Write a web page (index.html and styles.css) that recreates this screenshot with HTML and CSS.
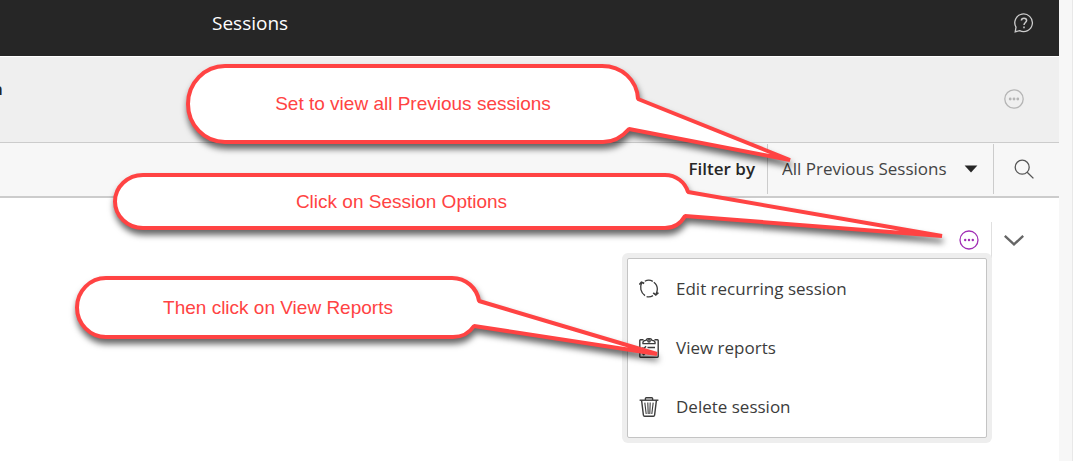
FILE: index.html
```html
<!DOCTYPE html>
<html lang="en">
  <head>
    <meta charset="UTF-8" />
    <meta name="viewport" content="width=device-width, initial-scale=1.0" />
    <title>Sessions</title>
    <link rel="stylesheet" href="styles.css">
  </head>
  <body>
    <div class="page">
      <header class="header">
        <h1 class="header__title">Sessions</h1>
        <button class="icon-button header__help" aria-label="Help">
          <svg class="icon" viewBox="0 0 20 20" fill="none" stroke="currentColor" stroke-width="1.3">
            <path d="M1.2 18.8L2 14.2A8.8 8.8 0 1 1 5.6 17.6L1.2 18.8z" />
            <path d="M7.4 7.6C7.4 4.4 12.6 4.4 12.6 7.6C12.6 9.6 10 9.4 10 12" stroke-width="1.5" />
            <path d="M10 13.4v1.8" stroke-width="1.5" />
          </svg>
        </button>
      </header>

      <section class="banner">
        <h2 class="banner__title">n</h2>
        <button class="icon-button banner__options" aria-label="Room options">
          <svg class="icon" viewBox="0 0 20 20">
            <circle cx="10" cy="10" r="9.2" fill="none" stroke="currentColor" stroke-width="1.3" />
            <g fill="currentColor">
              <circle cx="6.2" cy="10" r="1.4" />
              <circle cx="10" cy="10" r="1.4" />
              <circle cx="13.8" cy="10" r="1.4" />
            </g>
          </svg>
        </button>
      </section>

      <div class="filter">
        <label class="filter__label" for="filter">Filter by</label>
        <div class="filter__field">
          <select class="filter__select" id="filter">
            <option>All Previous Sessions</option>
          </select>
          <svg class="filter__caret" viewBox="0 0 14 8" fill="currentColor">
            <path d="M0.6 0.5h12.8L7 7.5z" />
          </svg>
        </div>
        <button class="icon-button filter__search" aria-label="Search">
          <svg class="icon" viewBox="0 0 20 20" fill="none" stroke="currentColor" stroke-width="1.3">
            <circle cx="8.2" cy="8.2" r="7" />
            <path d="M13.2 13.2L19.4 19.4" />
          </svg>
        </button>
      </div>

      <main class="sessions">
        <div class="session">
          <button class="icon-button session__options" aria-label="Session options">
            <svg class="icon" viewBox="0 0 20 20">
              <circle cx="10" cy="10" r="9" fill="none" stroke="currentColor" stroke-width="1.3" />
              <g fill="currentColor">
                <circle cx="6.2" cy="10" r="1.2" />
                <circle cx="10" cy="10" r="1.2" />
                <circle cx="13.8" cy="10" r="1.2" />
              </g>
            </svg>
          </button>
          <button class="icon-button session__toggle" aria-label="Expand session">
            <svg class="icon" viewBox="0 0 20 20" fill="none" stroke="currentColor" stroke-width="2.4">
              <path d="M0.8 5.8L10 14.4L19.2 5.8" />
            </svg>
          </button>
        </div>

        <div class="menu">
          <button class="menu__item">
            <svg class="icon" viewBox="0 0 20 20" fill="none" stroke="currentColor" stroke-width="1.3">
              <path d="M2.6 4C0.8 8 1.4 13.4 6 16.6" />
              <path d="M7.6 17.6C9.8 18.2 12 17.8 14 16.6" />
              <path d="M5.8 2.2C8.2 0.9 11.4 0.9 13.8 2.4" />
              <path d="M14.8 3.2C18.6 6.2 19 11 17 15.4" />
              <path d="M0.4 5.6L2.4 3.2L5.2 4.4" stroke-width="1.7" />
              <path d="M14.2 13.8L16.8 15.8L19.4 13.6" stroke-width="1.7" />
            </svg>
            Edit recurring session
          </button>
          <button class="menu__item">
            <svg class="icon" viewBox="0 0 20 20" fill="none" stroke="currentColor" stroke-width="1.4">
              <path d="M4.5 1.7H1.6A0.9 0.9 0 0 0 0.8 2.6V18.4A0.9 0.9 0 0 0 1.6 19.3H18.4A0.9 0.9 0 0 0 19.2 18.4V2.6A0.9 0.9 0 0 0 18.4 1.7H15.5" />
              <path d="M4 5.6C3.6 3.4 4.8 2.6 7 2.4C7.4 0 12.6 0 13 2.4C15.2 2.6 16.4 3.4 16 5.6z" />
              <circle cx="10" cy="2.8" r="1.2" />
              <path d="M8.5 9.5H16M8.5 15.5H16" />
              <path d="M3.4 9.4L4.8 10.8L7 8.2M3.4 15.4L4.8 16.8L7 14.2" />
            </svg>
            View reports
          </button>
          <button class="menu__item">
            <svg class="icon" viewBox="0 0 20 20" fill="none" stroke="currentColor" stroke-width="1.4">
              <path d="M0.6 3.2H19.4" />
              <path d="M6.4 3V1.6A0.8 0.8 0 0 1 7.2 0.8H12.8A0.8 0.8 0 0 1 13.6 1.6V3" />
              <path d="M2.6 3.4L4.4 18.2A1.2 1.2 0 0 0 5.6 19.2H14.4A1.2 1.2 0 0 0 15.6 18.2L17.4 3.4" />
              <path d="M5.8 5.6L7.2 17M8.8 5.6L9.2 17M11.2 5.6L10.8 17M14.2 5.6L12.8 17" stroke-width="1.1" />
            </svg>
            Delete session
          </button>
        </div>
      </main>

      <div class="callout callout--filter">
        <svg class="callout__shape" viewBox="0 0 450 76">
          <path d="M37 0H414C434 0 449 14 450 33L602 94L441 63C435 70 427 76 415 76H37A37 38 0 0 1 37 0z" />
        </svg>
        <p class="callout__text">Set to view all Previous sessions</p>
      </div>
      <div class="callout callout--options">
        <svg class="callout__shape" viewBox="0 0 573 53">
          <path d="M28 0H550C561 0 570 7 573 17L827 61L570 41C566 48 560 53 550 53H28A28 26.5 0 0 1 28 0z" />
        </svg>
        <p class="callout__text">Click on Session Options</p>
      </div>
      <div class="callout callout--reports">
        <svg class="callout__shape" viewBox="0 0 402 59">
          <path d="M29 0H375C389 0 400 10 402 23L580 76L397 48C393 54 386 59 376 59H29A29 29.5 0 0 1 29 0z" />
        </svg>
        <p class="callout__text">Then click on View Reports</p>
      </div>
    </div>
  </body>
</html>
```
FILE: styles.css
```css
* {
  margin: 0;
  padding: 0;
  box-sizing: border-box;
}
body {
  min-height: 100vh;
  padding-right: 13px;
  border-right: 1px solid #e8e8e8;
  background-color: #f7f7f7;
  font-family: "Open Sans", sans-serif;
  font-size: 17px;
  line-height: 24px;
  color: #262626;
  overflow-x: hidden;
}
button,
select {
  font: inherit;
  color: inherit;
  background: none;
  border: none;
  cursor: pointer;
}
.page {
  position: relative;
  min-height: 100vh;
  background-color: #fff;
}
.icon {
  display: block;
  flex: none;
  width: 20px;
  height: 20px;
}
.icon-button {
  display: grid;
  place-items: center;
}

/* Header */
.header {
  display: flex;
  align-items: center;
  justify-content: space-between;
  height: 56px;
  padding: 0 25px 10px 212px;
  background-color: #262626;
  color: #fff;
}
.header__title {
  font-size: 19px;
  font-weight: 400;
}
.header__help {
  color: #ccc;
}

/* Room banner */
.banner {
  display: flex;
  align-items: flex-start;
  justify-content: space-between;
  height: 87px;
  padding: 20px 35px 0 0;
  border-top: 1px solid #fff;
  border-bottom: 1px solid #ccc;
  background-color: #efefef;
}
.banner__title {
  margin-left: -8px;
  font-size: 17px;
  font-weight: 600;
}
.banner__options {
  margin-top: 12px;
  color: #b5b5b5;
}

/* Filter bar */
.filter {
  display: flex;
  align-items: center;
  justify-content: flex-end;
  height: 55px;
  padding-bottom: 2px;
  border-bottom: 2px solid #ccc;
  background-color: #f7f7f7;
}
.filter__label {
  margin-right: 12px;
  font-weight: 600;
}
.filter__field {
  position: relative;
  height: 50px;
  border: solid #ccc;
  border-width: 0 1px;
}
.filter__select {
  appearance: none;
  width: 225px;
  height: 50px;
  padding: 0 40px 0 14px;
  color: #444;
}
.filter__caret {
  position: absolute;
  top: 21px;
  right: 15px;
  width: 14px;
  height: 8px;
  pointer-events: none;
}
.filter__search {
  width: 65px;
  height: 50px;
  padding-right: 5px;
  color: #555;
}

/* Session list */
.sessions {
  position: relative;
  padding-top: 24px;
}
.session {
  display: flex;
  justify-content: flex-end;
  height: 36px;
}
.session__options {
  width: 45px;
  color: #a12fb5;
}
.session__toggle {
  width: 68px;
  padding-right: 24px;
  border-left: 1px solid #e0e0e0;
  color: #666;
}

/* Session menu */
.menu {
  position: absolute;
  top: 60px;
  right: 72px;
  display: flex;
  flex-direction: column;
  width: 360px;
  padding-bottom: 1px;
  border: 1px solid #c4c4c4;
  border-radius: 2px;
  background-color: #fff;
  box-shadow: 0 0 0 5px #eee;
}
.menu__item {
  display: flex;
  align-items: center;
  gap: 17px;
  height: 59px;
  padding: 0 11px;
  text-align: left;
  color: #3c3c3c;
}

/* Callouts, pinned to the controls on the right */
.callout {
  position: absolute;
  display: grid;
  place-items: center;
}
.callout--filter {
  top: 66px;
  right: 421px;
  width: 450px;
  height: 76px;
}
.callout--options {
  top: 175px;
  right: 371px;
  width: 573px;
  height: 53px;
}
.callout--reports {
  top: 278px;
  right: 580px;
  width: 402px;
  height: 59px;
}
.callout__shape {
  position: absolute;
  inset: 0;
  width: 100%;
  height: 100%;
  overflow: visible;
  fill: #fff;
  stroke: #ff4343;
  stroke-width: 4;
  stroke-linejoin: bevel;
  filter: drop-shadow(1px 5px 3px rgba(0, 0, 0, 0.6));
}
.callout__text {
  position: relative;
  font-family: "Liberation Sans", Arial, sans-serif;
  font-size: 19px;
  color: #ff4343;
}
```
